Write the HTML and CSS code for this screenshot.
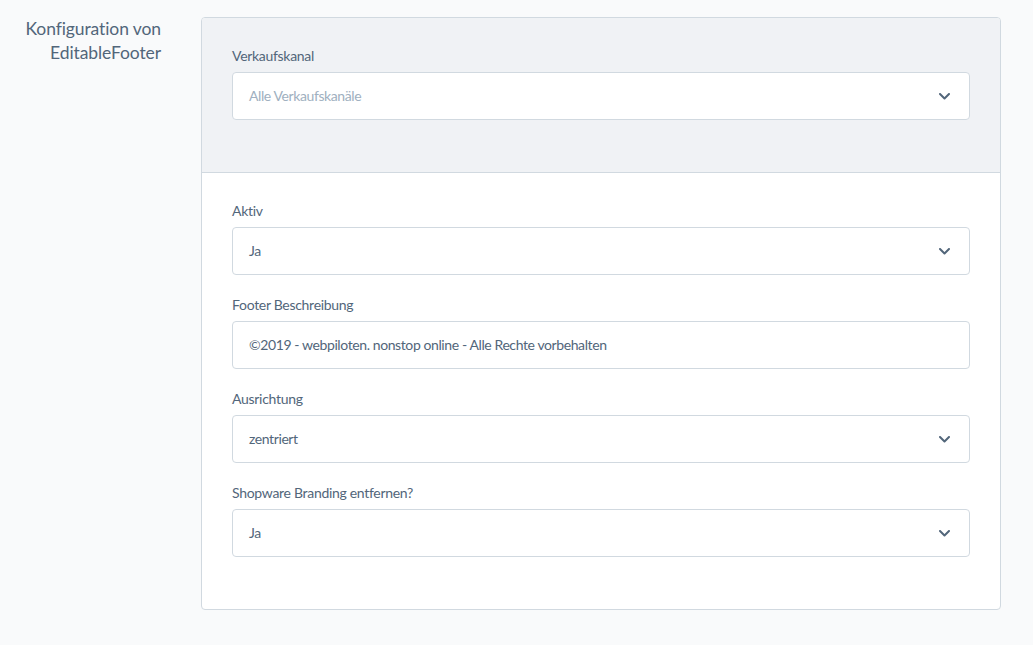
FILE: index.html
```html
<!DOCTYPE html>
<html lang="de">
<head>
<meta charset="utf-8">
<link rel="stylesheet" href="styles.css">
</head>
<body>
<div class="page">
  <div class="side-title">Konfiguration von<br>EditableFooter</div>
  <div class="card">
    <div class="card-header">
      <div class="field">
        <label class="field-label">Verkaufskanal</label>
        <div class="select">
          <span class="placeholder">Alle Verkaufskanäle</span>
          <svg class="chev" width="11" height="7" viewBox="0 0 11 7"><path d="M1 1 L5.5 5.5 L10 1" fill="none" stroke="currentColor" stroke-width="2" stroke-linecap="round" stroke-linejoin="round"/></svg>
        </div>
      </div>
    </div>
    <div class="card-body">
      <div class="field">
        <label class="field-label">Aktiv</label>
        <div class="select">
          <span class="value">Ja</span>
          <svg class="chev" width="11" height="7" viewBox="0 0 11 7"><path d="M1 1 L5.5 5.5 L10 1" fill="none" stroke="currentColor" stroke-width="2" stroke-linecap="round" stroke-linejoin="round"/></svg>
        </div>
      </div>
      <div class="field">
        <label class="field-label">Footer Beschreibung</label>
        <div class="select">
          <span class="value">©2019 - webpiloten. nonstop online - Alle Rechte vorbehalten</span>
        </div>
      </div>
      <div class="field">
        <label class="field-label">Ausrichtung</label>
        <div class="select">
          <span class="value">zentriert</span>
          <svg class="chev" width="11" height="7" viewBox="0 0 11 7"><path d="M1 1 L5.5 5.5 L10 1" fill="none" stroke="currentColor" stroke-width="2" stroke-linecap="round" stroke-linejoin="round"/></svg>
        </div>
      </div>
      <div class="field">
        <label class="field-label">Shopware Branding entfernen?</label>
        <div class="select">
          <span class="value">Ja</span>
          <svg class="chev" width="11" height="7" viewBox="0 0 11 7"><path d="M1 1 L5.5 5.5 L10 1" fill="none" stroke="currentColor" stroke-width="2" stroke-linecap="round" stroke-linejoin="round"/></svg>
        </div>
      </div>
    </div>
  </div>
</div>
</body>
</html>
```
FILE: styles.css
```css
html, body {
  margin: 0;
  padding: 0;
  background: #f9fafb;
  font-family: Lato, "Noto Sans", sans-serif;
  color: #52667a;
}
.page {
  display: grid;
  grid-template-columns: 161px 800px;
  column-gap: 40px;
  padding-top: 17px;
  height: 645px;
  box-sizing: border-box;
}
.side-title {
  text-align: right;
  font-size: 17.5px;
  line-height: 24px;
  letter-spacing: -0.1px;
  color: #52667a;
}
.card {
  border: 1px solid #d1d9e0;
  border-radius: 4px;
  background: #fff;
  align-self: start;
  overflow: hidden;
}
.card-header {
  background: #f0f2f5;
  border-bottom: 1px solid #d1d9e0;
  padding: 30px;
}
.card-body {
  padding: 30px;
}
.field {
  margin-bottom: 22px;
}
.field-label {
  display: block;
  font-size: 14px;
  line-height: 16px;
  letter-spacing: -0.3px;
  margin-bottom: 8px;
  color: #52667a;
}
.select {
  height: 48px;
  box-sizing: border-box;
  border: 1px solid #d1d9e0;
  border-radius: 4px;
  background: #fff;
  display: flex;
  align-items: center;
  padding: 0 19px 1px 16px;
  font-size: 14px;
  letter-spacing: -0.4px;
}
.placeholder {
  color: #a0b0c0;
  flex: 1;
}
.value {
  color: #52667a;
  flex: 1;
}
.chev {
  color: #52667a;
  margin-top: 1px;
}
```
